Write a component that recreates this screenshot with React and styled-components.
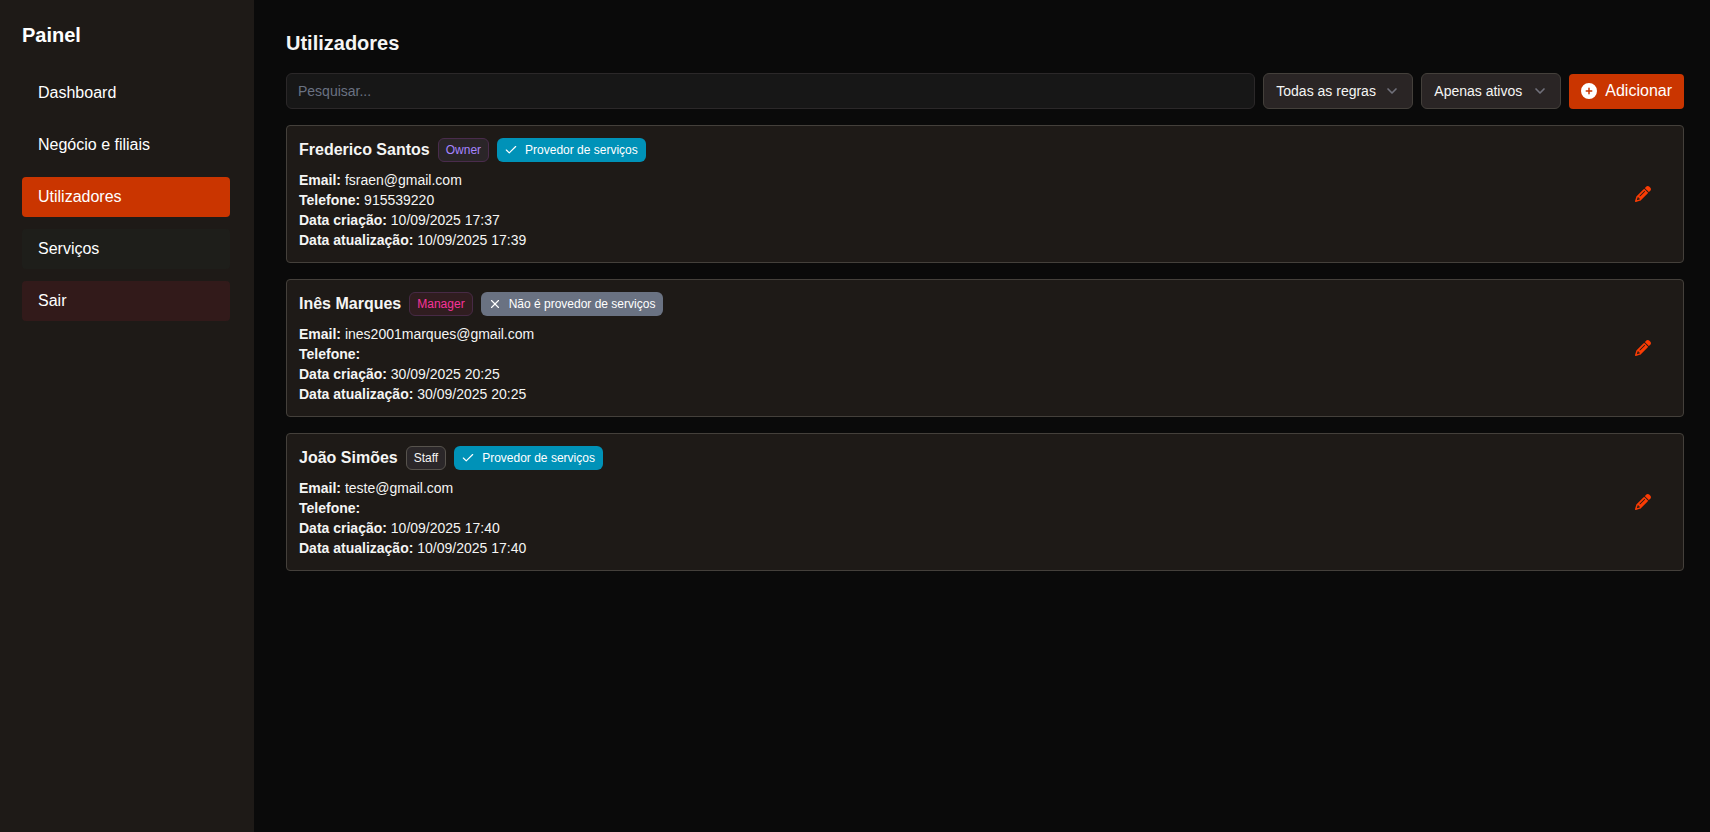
import React, { useState } from "react";
import styled, { createGlobalStyle } from "styled-components";
import { Check, ChevronDown, X } from "lucide-react";
import { FaCirclePlus, FaPencil } from "react-icons/fa6";

const GlobalStyle = createGlobalStyle`
  *, *::before, *::after {
    box-sizing: border-box;
  }
  body {
    margin: 0;
    background: #0a0a0a;
    color: #f5f5f4;
    font-family: Arial, "Liberation Sans", sans-serif;
    font-size: 16px;
    line-height: 24px;
  }
  button, input, select {
    font: inherit;
    color: inherit;
  }
`;

const Layout = styled.div`
  display: flex;
  min-height: 100vh;
`;

const Sidebar = styled.aside`
  flex: 0 0 254px;
  padding: 21px 24px 24px 22px;
  background: #1e1a17;
  color: #fff;
`;

const SidebarTitle = styled.h2`
  margin: 0 0 24px;
  font-size: 20px;
  line-height: 28px;
`;

const Menu = styled.nav`
  display: flex;
  flex-direction: column;
  gap: 12px;
`;

const MENU_COLORS = {
  active: "#ca3500",
  hover: "#1e1e1a",
  danger: "#321a1a",
};

const MenuLink = styled.a`
  padding: 8px 16px;
  border-radius: 4px;
  color: #fff;
  text-decoration: none;
  background: ${({ $kind }) => MENU_COLORS[$kind] || "transparent"};
`;

const Main = styled.main`
  flex: 1;
  min-width: 0;
  padding: 29px 26px 32px 32px;
`;

const Title = styled.h1`
  margin: 0 0 16px;
  font-size: 20px;
  line-height: 28px;
`;

const Toolbar = styled.div`
  display: flex;
  align-items: flex-end;
  gap: 8px;
  margin-bottom: 16px;
`;

const SearchInput = styled.input`
  flex: 1;
  min-width: 0;
  height: 36px;
  padding: 0 12px 0 11px;
  border: 1px solid #2b2829;
  border-radius: 6px;
  outline: none;
  background: #171717;
  font-size: 14px;

  &::placeholder {
    color: #6a7282;
    opacity: 1;
  }
`;

const SelectWrapper = styled.div`
  position: relative;
  width: ${({ $width }) => $width}px;

  svg {
    position: absolute;
    top: 10px;
    right: 13px;
    color: #71717b;
    pointer-events: none;
  }
`;

const Select = styled.select`
  display: block;
  width: 100%;
  height: 36px;
  padding: 0 32px 0 12px;
  border: 1px solid #44403b;
  border-radius: 6px;
  appearance: none;
  background: #2a2525;
  font-size: 14px;
`;

const AddButton = styled.button`
  display: flex;
  align-items: center;
  gap: 8px;
  padding: 5px 12px 6px;
  border: 0;
  border-radius: 4px;
  background: #ca3500;
  color: #fff;
  cursor: pointer;
`;

const UserList = styled.ul`
  display: flex;
  flex-direction: column;
  gap: 16px;
  margin: 0;
  padding: 0;
  list-style: none;
`;

const UserCard = styled.li`
  display: flex;
  align-items: center;
  justify-content: space-between;
  padding: 12px;
  border: 1px solid #44403b;
  border-radius: 4px;
  background: #1e1a17;
`;

const UserHeader = styled.div`
  display: flex;
  align-items: center;
  gap: 8px;
  margin-bottom: 8px;
`;

const UserName = styled.h3`
  margin: 0;
  font-size: 16px;
  line-height: 24px;
`;

const ROLE_COLORS = {
  Owner: { text: "#a684ff", background: "#2a2528", border: "#4a2c4d" },
  Manager: { text: "#f6339a", background: "#301d20", border: "#472a45" },
  Staff: { text: "#f5f5f4", background: "#2b2729", border: "#57534d" },
};

const RoleBadge = styled.span`
  padding: 3px 7px;
  border: 1px solid ${({ $role }) => ROLE_COLORS[$role].border};
  border-radius: 6px;
  background: ${({ $role }) => ROLE_COLORS[$role].background};
  color: ${({ $role }) => ROLE_COLORS[$role].text};
  font-size: 12px;
  line-height: 16px;
`;

const ProviderBadge = styled.span`
  display: flex;
  align-items: center;
  gap: 7px;
  padding: 4px 8px 4px 7px;
  border-radius: 6px;
  background: ${({ $provider }) => ($provider ? "#0092b8" : "#6a7282")};
  color: #fff;
  font-size: 12px;
  font-weight: 500;
  line-height: 16px;
`;

const UserInfo = styled.div`
  font-size: 14px;
  line-height: 20px;
`;

const EditButton = styled.button`
  display: flex;
  padding: 8px;
  margin-right: 12px;
  border: 0;
  background: transparent;
  color: #fb3c04;
  cursor: pointer;
`;

const menuItems = [
  { title: "Dashboard" },
  { title: "Negócio e filiais" },
  { title: "Utilizadores", kind: "active" },
  { title: "Serviços", kind: "hover" },
  { title: "Sair", kind: "danger" },
];

const users = [
  {
    name: "Frederico Santos",
    role: "Owner",
    provider: true,
    email: "fsraen@gmail.com",
    phone: "915539220",
    createdAt: "10/09/2025 17:37",
    updatedAt: "10/09/2025 17:39",
  },
  {
    name: "Inês Marques",
    role: "Manager",
    provider: false,
    email: "ines2001marques@gmail.com",
    phone: "",
    createdAt: "30/09/2025 20:25",
    updatedAt: "30/09/2025 20:25",
  },
  {
    name: "João Simões",
    role: "Staff",
    provider: true,
    email: "teste@gmail.com",
    phone: "",
    createdAt: "10/09/2025 17:40",
    updatedAt: "10/09/2025 17:40",
  },
];

const Filter = ({ label, width, options }) => {
  const [value, setValue] = useState(options[0]);
  return (
    <SelectWrapper $width={width}>
      <Select
        aria-label={label}
        value={value}
        onChange={(e) => setValue(e.target.value)}
      >
        {options.map((option) => (
          <option key={option}>{option}</option>
        ))}
      </Select>
      <ChevronDown size={16} strokeWidth={2.5} />
    </SelectWrapper>
  );
};

const User = ({ user }) => (
  <UserCard>
    <div>
      <UserHeader>
        <UserName>{user.name}</UserName>
        <RoleBadge $role={user.role}>{user.role}</RoleBadge>
        <ProviderBadge $provider={user.provider}>
          {user.provider ? <Check size={14} /> : <X size={14} />}
          {user.provider ? "Provedor de serviços" : "Não é provedor de serviços"}
        </ProviderBadge>
      </UserHeader>
      <UserInfo>
        <div>
          <strong>Email:</strong> {user.email}
        </div>
        <div>
          <strong>Telefone:</strong> {user.phone}
        </div>
        <div>
          <strong>Data criação:</strong> {user.createdAt}
        </div>
        <div>
          <strong>Data atualização:</strong> {user.updatedAt}
        </div>
      </UserInfo>
    </div>
    <EditButton type="button" aria-label={`Editar ${user.name}`}>
      <FaPencil size={16} />
    </EditButton>
  </UserCard>
);

const App = () => {
  const [search, setSearch] = useState("");
  const visible = users.filter((user) =>
    user.name.toLowerCase().includes(search.toLowerCase())
  );

  return (
    <>
      <GlobalStyle />
      <Layout>
        <Sidebar>
          <SidebarTitle>Painel</SidebarTitle>
          <Menu>
            {menuItems.map((item) => (
              <MenuLink key={item.title} href="#" $kind={item.kind}>
                {item.title}
              </MenuLink>
            ))}
          </Menu>
        </Sidebar>
        <Main>
          <Title>Utilizadores</Title>
          <Toolbar>
            <SearchInput
              type="text"
              aria-label="Pesquisar"
              placeholder="Pesquisar..."
              value={search}
              onChange={(e) => setSearch(e.target.value)}
            />
            <Filter
              label="Regra"
              width={150}
              options={["Todas as regras", "Owner", "Manager", "Staff"]}
            />
            <Filter
              label="Estado"
              width={140}
              options={["Apenas ativos", "Inativos"]}
            />
            <AddButton type="button">
              <FaCirclePlus size={16} />
              Adicionar
            </AddButton>
          </Toolbar>
          <UserList>
            {visible.map((user) => (
              <User key={user.email} user={user} />
            ))}
          </UserList>
        </Main>
      </Layout>
    </>
  );
};

export default App;
